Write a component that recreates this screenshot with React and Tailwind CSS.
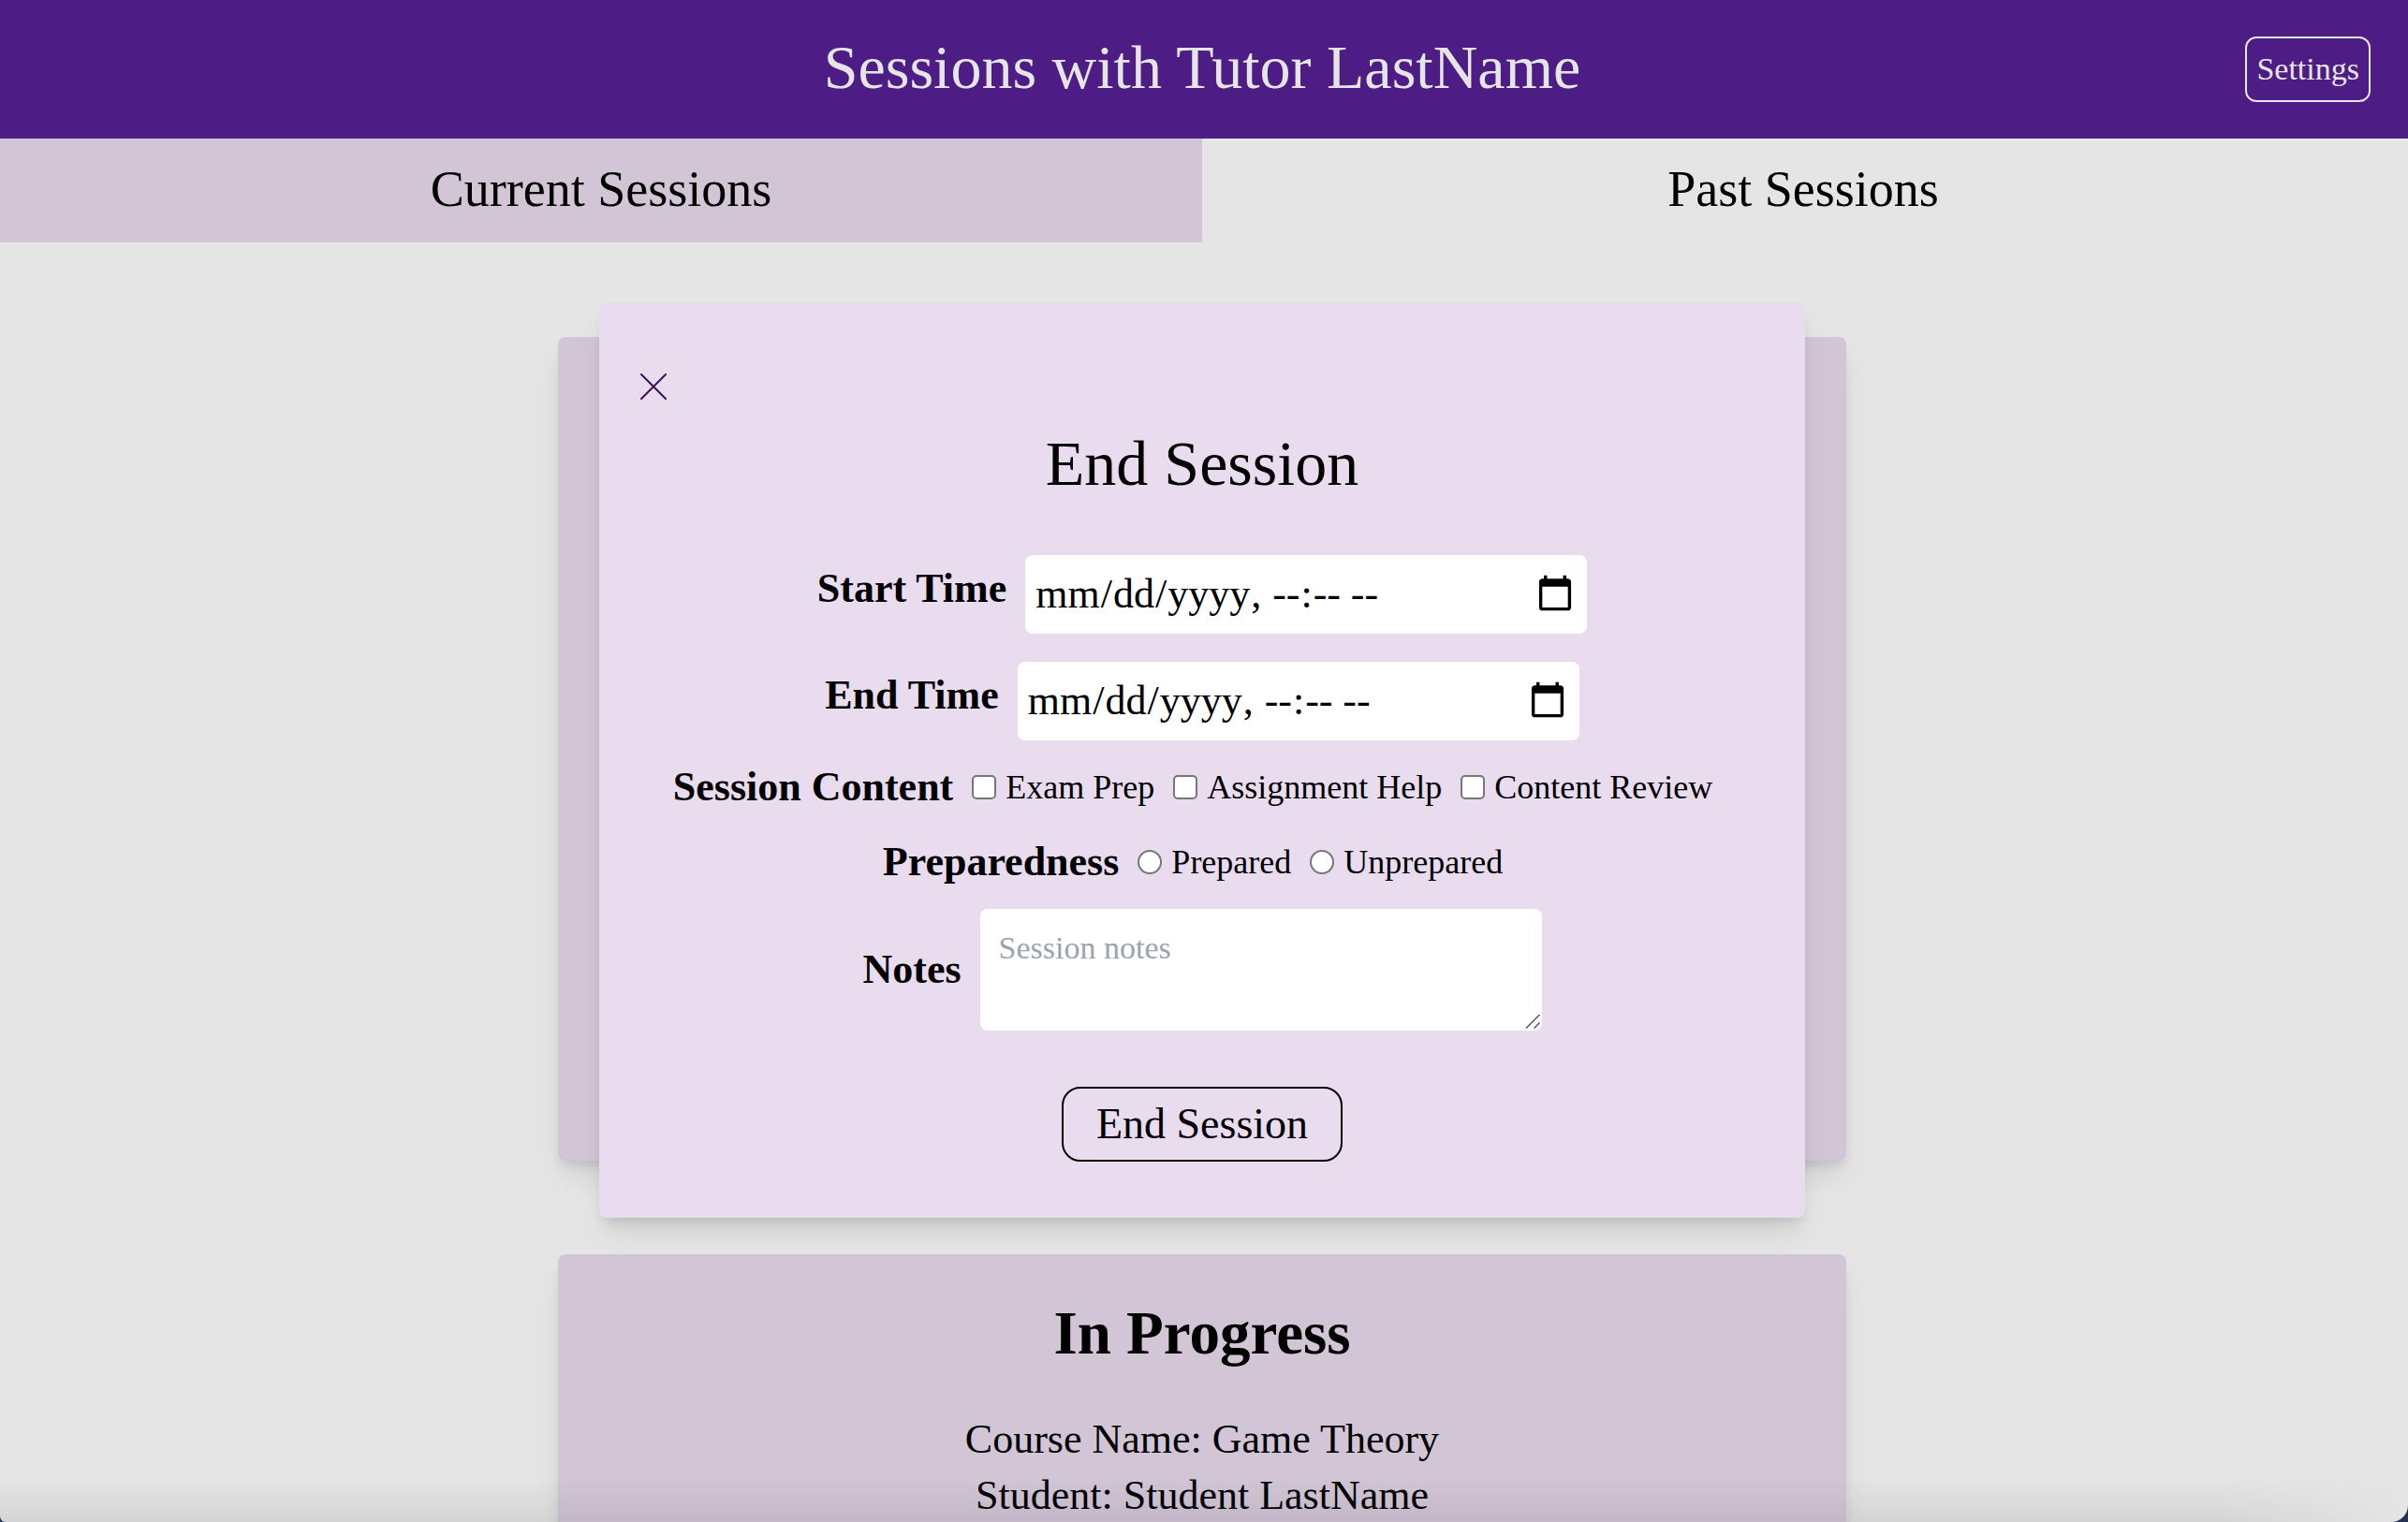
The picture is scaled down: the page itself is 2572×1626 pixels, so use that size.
import React from "react";

const CONTENT_OPTIONS = ["Exam Prep", "Assignment Help", "Content Review"];
const PREPAREDNESS_OPTIONS = ["Prepared", "Unprepared"];

const CARD_SHADOW =
  "shadow-[0_20px_30px_-6px_rgba(0,0,0,0.1),0_8px_12px_-4px_rgba(0,0,0,0.1)]";

function Header() {
  return (
    <header className="grid h-[148px] grid-cols-[1fr_auto_1fr] items-center bg-[#4e1c85] px-10 text-[#e5e5e5]">
      <span />
      <h1 className="pr-1 pb-1 text-[66px] leading-none">Sessions with Tutor LastName</h1>
      <button
        type="button"
        className="h-[70px] justify-self-end rounded-xl border-2 border-[#e5e5e5] px-2.5 text-[34px] leading-none"
      >
        Settings
      </button>
    </header>
  );
}

function Tabs() {
  return (
    <nav className="grid grid-cols-2 pr-1 text-[54px] leading-none">
      <button type="button" className="h-[111px] bg-[#d2c6d6] pb-1">
        Current Sessions
      </button>
      <button type="button" className="h-[111px] pb-1">
        Past Sessions
      </button>
    </nav>
  );
}

function TimeRow({ id, label }) {
  return (
    <div className="flex items-center justify-center gap-5">
      <label htmlFor={id} className="mb-3 text-[44px] leading-none font-bold">
        {label}
      </label>
      <input
        id={id}
        type="datetime-local"
        className="h-[84px] w-[600px] rounded-lg bg-white px-2.5 text-[44px] leading-[60px]"
      />
    </div>
  );
}

function ChoiceRow({ label, type, name, options }) {
  return (
    <fieldset className="flex h-20 items-center justify-center gap-5">
      <span className="text-[44px] leading-none font-bold">{label}</span>
      {options.map((option) => (
        <label
          key={option}
          className="flex items-center gap-2.5 text-[36px] leading-none last:mr-5"
        >
          <input
            type={type}
            name={name}
            className={
              type === "radio"
                ? "size-[26px] appearance-none rounded-full border-2 border-[#767676] bg-white"
                : "size-[26px] appearance-none rounded-[5px] border-2 border-[#767676] bg-white"
            }
          />
          {option}
        </label>
      ))}
    </fieldset>
  );
}

function EndSessionDialog() {
  return (
    <form
      role="dialog"
      aria-label="End Session"
      className={`absolute inset-x-0 top-16 mx-auto w-full max-w-[1288px] rounded-lg bg-[#e9dcee] pt-[68px] pb-[60px] ${CARD_SHADOW}`}
    >
      <button type="button" aria-label="Close" className="ml-9 block p-2">
        <svg
          viewBox="0 0 28 28"
          className="size-7"
          fill="none"
          stroke="#3b1254"
          strokeWidth="2"
          strokeLinecap="round"
        >
          <path d="M1 1L27 27M27 1L1 27" />
        </svg>
      </button>
      <h2 className="mt-5 text-center text-[68px] leading-[80px]">End Session</h2>
      <div className="mt-[58px] flex flex-col gap-[30px]">
        <TimeRow id="start-time" label="Start Time" />
        <TimeRow id="end-time" label="End Time" />
      </div>
      <div className="my-2.5">
        <ChoiceRow
          label="Session Content"
          type="checkbox"
          name="content"
          options={CONTENT_OPTIONS}
        />
        <ChoiceRow
          label="Preparedness"
          type="radio"
          name="preparedness"
          options={PREPAREDNESS_OPTIONS}
        />
      </div>
      <div className="flex items-center justify-center gap-5">
        <label htmlFor="notes" className="text-[44px] leading-none font-bold">
          Notes
        </label>
        <div className="relative flex">
          <textarea
            id="notes"
            placeholder="Session notes"
            className="h-[130px] w-[600px] resize-none rounded-lg bg-white px-5 py-5 text-[34px] leading-[44px] placeholder:text-[#9ca3af]"
          />
          <svg
            viewBox="0 0 16 16"
            className="pointer-events-none absolute right-0.5 bottom-0.5 size-4"
            fill="none"
            stroke="#555"
            strokeWidth="1.5"
            aria-hidden="true"
          >
            <path d="M1 15.500L15.500 1M9.500 15.500L15.500 9.500" />
          </svg>
        </div>
      </div>
      <button
        type="submit"
        className="mx-auto mt-[60px] block h-20 w-[300px] rounded-[20px] border-2 border-black text-[46px] leading-none"
      >
        End Session
      </button>
    </form>
  );
}

function SessionCard({ status, course, student }) {
  return (
    <section
      className={`h-[880px] w-full max-w-[1376px] shrink-0 rounded-lg bg-[#d2c6d6] pt-11 text-center ${CARD_SHADOW}`}
    >
      {status && (
        <>
          <h2 className="text-[65px] leading-[80px] font-bold">{status}</h2>
          <div className="mt-11 text-[44px] leading-[60px]">
            <p>Course Name: {course}</p>
            <p>Student: {student}</p>
          </div>
        </>
      )}
    </section>
  );
}

export default function App() {
  return (
    <div className="bg-[#26304f]">
      <div className="relative h-screen overflow-hidden rounded-br-[18px] rounded-bl-md bg-[#e5e5e5] font-['Liberation_Serif',serif] text-black">
        <Header />
        <Tabs />
        <div className="pr-1">
          <main className="relative flex flex-col items-center gap-[100px] pt-[101px]">
            <SessionCard />
            <SessionCard
              status="In Progress"
              course="Game Theory"
              student="Student LastName"
            />
            <EndSessionDialog />
          </main>
        </div>
        <div className="pointer-events-none absolute right-0 bottom-0 left-0 h-12 bg-linear-to-t from-black/7 to-transparent mask-r-from-92% mask-r-to-100%" />
      </div>
    </div>
  );
}
